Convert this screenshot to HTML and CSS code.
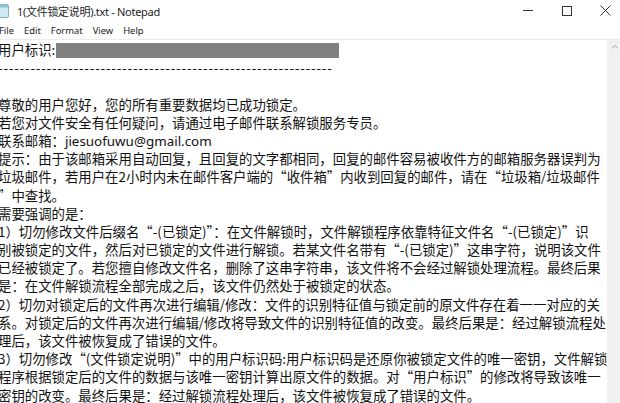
FILE: index.html
```html
<!DOCTYPE html>
<html lang="zh-CN">
<head>
    <meta charset="UTF-8">
    <title>1(文件锁定说明).txt - Notepad</title>
    <link rel="stylesheet" href="styles.css">
</head>
<body>
    <div class="window">
        <div class="titlebar">
            <svg class="app-icon" width="10" height="14" viewBox="0 0 10 14">
                <rect x="0.5" y="0.5" width="9" height="13" rx="1.5" fill="#cfe9f1" stroke="#7fb3c4"/>
                <rect x="0.5" y="0.5" width="9" height="3" rx="1.5" fill="#8cc4d6"/>
            </svg>
            <span class="title">1(文件锁定说明).txt - Notepad</span>
            <div class="controls">
                <div class="ctrl"><span class="min"></span></div>
                <div class="ctrl"><span class="max"></span></div>
                <div class="ctrl">
                    <svg width="11" height="11" viewBox="0 0 11 11">
                        <path d="M0.5 0.5 L10.5 10.5 M10.5 0.5 L0.5 10.5" stroke="#333" stroke-width="1"/>
                    </svg>
                </div>
            </div>
        </div>
        <div class="menubar">
            <span>File</span>
            <span>Edit</span>
            <span>Format</span>
            <span>View</span>
            <span>Help</span>
        </div>
        <div class="editor">
            <div class="text">
                <div class="line">用户标识:<span class="redacted"></span></div>
                <div class="line dashes">--------------------------------------------------------------</div>
                <div class="line"> </div>
                <div class="line">尊敬的用户您好，您的所有重要数据均已成功锁定。</div>
                <div class="line">若您对文件安全有任何疑问，请通过电子邮件联系解锁服务专员。</div>
                <div class="line">联系邮箱：<span class="latin">jiesuofuwu@gmail.com</span></div>
                <div class="line">提示：由于该邮箱采用自动回复，且回复的文字都相同，回复的邮件容易被收件方的邮箱服务器误判为</div>
                <div class="line">垃圾邮件，若用户在2小时内未在邮件客户端的“收件箱”内收到回复的邮件，请在“垃圾箱/垃圾邮件</div>
                <div class="line">”中查找。</div>
                <div class="line">需要强调的是：</div>
                <div class="line">1）切勿修改文件后缀名“-(已锁定)”：在文件解锁时，文件解锁程序依靠特征文件名“-(已锁定)”识</div>
                <div class="line">别被锁定的文件，然后对已锁定的文件进行解锁。若某文件名带有“-(已锁定)”这串字符，说明该文件</div>
                <div class="line">已经被锁定了。若您擅自修改文件名，删除了这串字符串，该文件将不会经过解锁处理流程。最终后果</div>
                <div class="line">是：在文件解锁流程全部完成之后，该文件仍然处于被锁定的状态。</div>
                <div class="line">2）切勿对锁定后的文件再次进行编辑/修改：文件的识别特征值与锁定前的原文件存在着一一对应的关</div>
                <div class="line">系。对锁定后的文件再次进行编辑/修改将导致文件的识别特征值的改变。最终后果是：经过解锁流程处</div>
                <div class="line">理后，该文件被恢复成了错误的文件。</div>
                <div class="line">3）切勿修改“(文件锁定说明)”中的用户标识码:用户标识码是还原你被锁定文件的唯一密钥，文件解锁</div>
                <div class="line">程序根据锁定后的文件的数据与该唯一密钥计算出原文件的数据。对“用户标识”的修改将导致该唯一</div>
                <div class="line">密钥的改变。最终后果是：经过解锁流程处理后，该文件被恢复成了错误的文件。</div>
            </div>
            <div class="scrollbar">
                <svg class="arrow" width="8" height="5" viewBox="0 0 8 5">
                    <path d="M1 4.5 L4 1.5 L7 4.5" fill="none" stroke="#a6a6a6" stroke-width="1"/>
                </svg>
            </div>
        </div>
    </div>
</body>
</html>
```

FILE: styles.css
```css
body, html {
    margin: 0;
    padding: 0;
    background-color: #ffffff;
}
.window {
    width: 620px;
    height: 403px;
    overflow: hidden;
    display: flex;
    flex-direction: column;
    background-color: #ffffff;
    color: #111;
    font-family: "Noto Sans", "Noto Sans CJK SC", sans-serif;
}
.titlebar {
    height: 21px;
    display: flex;
    align-items: center;
    flex-shrink: 0;
}
.app-icon {
    margin-left: -1px;
}
.title {
    margin-left: 8px;
    font-size: 11px;
    letter-spacing: -0.3px;
    color: #222;
}
.controls {
    margin-left: auto;
    margin-right: -5px;
    display: flex;
    height: 100%;
}
.ctrl {
    width: 39px;
    display: flex;
    align-items: center;
    justify-content: center;
}
.min {
    width: 10px;
    height: 1px;
    background-color: #333;
}
.max {
    width: 8px;
    height: 8px;
    border: 1px solid #333;
}
.menubar {
    height: 18px;
    display: flex;
    align-items: center;
    gap: 10px;
    margin-left: -1px;
    font-size: 9.4px;
    color: #1a1a1a;
    flex-shrink: 0;
}
.editor {
    flex: 1;
    display: flex;
    border-top: 1px solid #ececec;
    min-height: 0;
}
.text {
    flex: 1;
    overflow: hidden;
    font-family: "Noto Sans CJK SC", sans-serif;
    font-size: 13.4px;
    line-height: 18.2px;
}
.line {
    white-space: pre;
    margin-left: -2px;
    height: 18.2px;
}
.latin {
    font-family: "Noto Sans", sans-serif;
}
.dashes {
    letter-spacing: 0.75px;
}
.redacted {
    display: inline-block;
    width: 283px;
    height: 15px;
    margin-left: 1px;
    vertical-align: -3px;
    background-color: #808080;
}
.scrollbar {
    width: 13px;
    background-color: #f1f1f1;
    display: flex;
    justify-content: center;
    align-items: flex-start;
}
.arrow {
    margin-top: 4px;
    margin-left: 3px;
}
```
